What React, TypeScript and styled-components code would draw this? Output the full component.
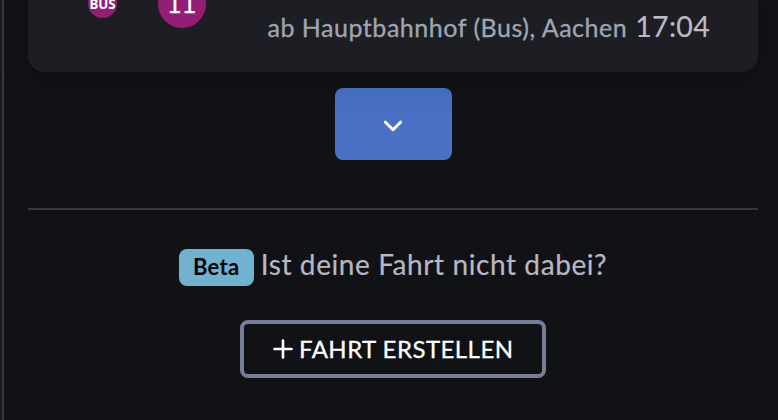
import React from "react";
import styled, { createGlobalStyle } from "styled-components";

const GlobalStyle = createGlobalStyle`
  * { box-sizing: border-box; }
  body {
    margin: 0;
    background: #111216;
    overflow: hidden;
    font-family: Lato, "Open Sans", sans-serif;
  }
`;

const Page = styled.main`
  width: 778px;
  height: 420px;
  margin: 0;
  overflow: hidden;
  background: #111216;
  border-left: 2px solid #18191d;
`;

const Column = styled.div`
  height: 100%;
  padding: 0 20px 0 24px;
  border-left: 2px solid #39393c;
  display: flex;
  flex-direction: column;
  align-items: center;
`;

const TripCard = styled.article`
  width: 100%;
  height: 92px;
  margin-top: -20px;
  flex: none;
  padding: 0 48px 0 60px;
  display: flex;
  align-items: flex-start;
  background: #1d1e23;
  border-radius: 0 0 16px 16px;
  box-shadow: 0 8px 28px rgba(0, 0, 0, 0.16);
`;

const Circle = styled.span<{ $size: number; $font: number; $top: number }>`
  flex: none;
  width: ${(p) => p.$size}px;
  height: ${(p) => p.$size}px;
  margin-top: ${(p) => p.$top}px;
  padding-top: 2px;
  border-radius: 50%;
  display: flex;
  align-items: center;
  justify-content: center;
  background: #941d76;
  color: #fff;
  font: 700 ${(p) => p.$font}px / 1 "Noto Sans", sans-serif;
`;

const LineNumber = styled(Circle)`
  margin-left: 41px;
  font-family: "DejaVu Sans", sans-serif;
  font-weight: 400;
  -webkit-text-stroke: 0.3px #fff;
`;

const Departure = styled.p`
  margin: 26px 0 0 auto;
  display: flex;
  align-items: baseline;
  line-height: 40px;
  white-space: nowrap;
`;

const Station = styled.span`
  color: #a0a5b4;
  font-size: 25px;
  letter-spacing: 0.52px;
  -webkit-text-stroke: 0.3px #a0a5b4;
`;

const Time = styled.time`
  margin-left: 8px;
  color: #bbbac6;
  font-size: 28.5px;
  letter-spacing: 0.3px;
  -webkit-text-stroke: 0.2px #bbbac6;
`;

const MoreButton = styled.button`
  flex: none;
  width: 117px;
  height: 72px;
  margin-top: 16px;
  padding: 3px 0 0;
  border: 0;
  border-radius: 8px;
  display: flex;
  align-items: center;
  justify-content: center;
  background: linear-gradient(#466dba, #4a71c4 50%);
`;

const Divider = styled.hr`
  flex: none;
  width: 100%;
  height: 2px;
  margin: 48px 0 0;
  border: 0;
  background: #39393c;
`;

const Question = styled.p`
  height: 38px;
  margin: 39px 0 0;
  display: flex;
  align-items: flex-start;
  color: #b8b7c3;
  font-size: 28px;
  line-height: 30px;
  letter-spacing: 0.59px;
  white-space: nowrap;
  -webkit-text-stroke: 0.2px #b8b7c3;
`;

const Badge = styled.span`
  width: 75px;
  height: 37px;
  margin-right: 7px;
  padding-bottom: 2px;
  border-radius: 8px;
  display: flex;
  align-items: center;
  justify-content: center;
  background: #70b2d0;
  color: #050608;
  font-size: 22px;
  font-weight: 700;
  letter-spacing: 0.3px;
  -webkit-text-stroke: 0;
`;

const CreateButton = styled.button`
  flex: none;
  width: 306px;
  height: 58px;
  margin-top: 33px;
  padding: 0 0 0 29px;
  display: flex;
  align-items: center;
  gap: 6px;
  background: transparent;
  border: 4px solid #777e98;
  border-radius: 8px;
  color: #fff;
  font: 400 24px / 32px Lato, sans-serif;
  letter-spacing: 0.46px;
  white-space: nowrap;
  -webkit-text-stroke: 0.3px #fff;
`;

export default function App() {
  return (
    <>
      <GlobalStyle />
      <Page>
        <Column>
          <TripCard>
            <Circle $size={29} $font={13.3} $top={9}>BUS</Circle>
            <LineNumber $size={48} $font={23} $top={0}>11</LineNumber>
            <Departure>
              <Station>ab Hauptbahnhof (Bus), Aachen</Station>
              <Time>17:04</Time>
            </Departure>
          </TripCard>
          <MoreButton aria-label="Mehr anzeigen">
            <svg width="20" height="14" viewBox="0 0 20 14" fill="none" stroke="#fff" strokeWidth="3" strokeLinecap="round" strokeLinejoin="round">
              <path d="M2.4 3.2 10 10.7l7.6-7.5" />
            </svg>
          </MoreButton>
          <Divider />
          <Question>
            <Badge>Beta</Badge>
            Ist deine Fahrt nicht dabei?
          </Question>
          <CreateButton>
            <svg width="20" height="20" viewBox="0 0 20 20" fill="none" stroke="#fff" strokeWidth="2.6" strokeLinecap="round">
              <path d="M10 1.5v17M1.5 10h17" />
            </svg>
            <span>FAHRT ERSTELLEN</span>
          </CreateButton>
        </Column>
      </Page>
    </>
  );
}
